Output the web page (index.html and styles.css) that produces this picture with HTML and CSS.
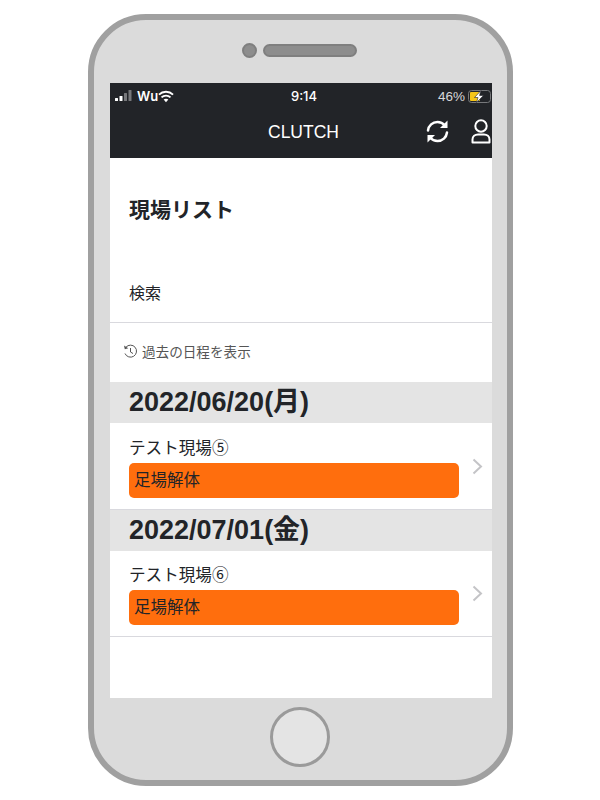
FILE: index.html
```html
<!DOCTYPE html>
<html lang="ja">
<head>
	<meta charset="UTF-8">
	<title>CLUTCH</title>
	<link rel="stylesheet" href="styles.css">
</head>
<body>
	<div class="phone">
		<div class="phone-top">
			<span class="camera"></span>
			<span class="speaker"></span>
		</div>
		<div class="screen">
			<div class="status">
				<div class="status-left">
					<svg class="signal" width="18" height="12" viewBox="0 0 18 12">
						<rect x="0" y="8" width="3" height="3" rx="0.5" fill="#fff"/>
						<rect x="4.500" y="6" width="3" height="5" rx="0.5" fill="#fff"/>
						<rect x="9" y="3" width="3" height="8" rx="0.5" fill="#77787b"/>
						<rect x="13.500" y="0" width="3" height="11" rx="0.5" fill="#77787b"/>
					</svg>
					<span class="carrier">Wu</span>
					<svg class="wifi" width="16" height="13" viewBox="0 0 17 13">
						<path d="M1 4.500C5.200 0.500 11.800 0.500 16 4.500" fill="none" stroke="#fff" stroke-width="2"/>
						<path d="M3.700 7.400C6.400 4.900 10.600 4.900 13.300 7.400" fill="none" stroke="#fff" stroke-width="2"/>
						<path d="M6 9.800C7.400 8.700 9.600 8.700 11 9.800L8.500 12.700Z" fill="#fff"/>
					</svg>
				</div>
				<div class="status-time">9:14</div>
				<div class="status-right">
					<span>46%</span>
					<svg class="battery" width="23" height="13" viewBox="0 0 23 13">
						<rect x="0.500" y="0.500" width="22" height="12" rx="3" fill="none" stroke="#77787b"/>
						<rect x="2" y="2" width="10" height="9" rx="1" fill="#f5c518"/>
						<path d="M13 0.500L6.500 7.500H10L8.500 12.500L15.500 5.500H11.500Z" fill="#fff" stroke="#22242a" stroke-width="0.600"/>
					</svg>
				</div>
			</div>
			<div class="nav">
				<div class="nav-title">CLUTCH</div>
				<svg class="icon-sync" width="25" height="25" viewBox="0 0 25 25">
					<path d="M3 11.500C3.600 6.500 7.500 3 12.500 3C15.500 3 18 4.300 20 6.500" fill="none" stroke="#fff" stroke-width="2.500" stroke-linecap="round"/>
					<path d="M22.500 1.500V9H15Z" fill="#fff"/>
					<path d="M22 13.500C21.400 18.500 17.500 22 12.500 22C9.500 22 7 20.700 5 18.500" fill="none" stroke="#fff" stroke-width="2.500" stroke-linecap="round"/>
					<path d="M2.500 23.500V16H10Z" fill="#fff"/>
				</svg>
				<svg class="icon-user" width="20" height="25" viewBox="0 0 20 25">
					<circle cx="10" cy="7" r="5.700" fill="none" stroke="#fff" stroke-width="2"/>
					<path d="M1.500 23.500V20.500C1.500 17.500 4 15.500 7 15.500H13C16 15.500 18.500 17.500 18.500 20.500V23.500Z" fill="none" stroke="#fff" stroke-width="2" stroke-linejoin="round"/>
				</svg>
			</div>
			<h1 class="page-title">現場リスト</h1>
			<div class="search">検索</div>
			<div class="history">
				<svg width="15" height="15" viewBox="0 0 15 15">
					<path d="M3 3.200A6 6 0 1 1 2 9.500" fill="none" stroke="#555" stroke-width="1"/>
					<path d="M1 1.500L1.800 5.200L5.300 4.300Z" fill="#555"/>
					<path d="M7.500 4V8L10 9.500" fill="none" stroke="#555" stroke-width="1"/>
				</svg>
				<span>過去の日程を表示</span>
			</div>
			<div class="date-head">2022/06/20(月)</div>
			<div class="site">
				<div class="site-body">
					<div class="site-name">テスト現場⑤</div>
					<div class="site-tag">足場解体</div>
				</div>
				<svg class="chevron" width="11" height="17" viewBox="0 0 11 17">
					<path d="M1.500 1.500L9 8.500L1.500 15.500" fill="none" stroke="#c4c4c7" stroke-width="2"/>
				</svg>
			</div>
			<div class="date-head">2022/07/01(金)</div>
			<div class="site">
				<div class="site-body">
					<div class="site-name">テスト現場⑥</div>
					<div class="site-tag">足場解体</div>
				</div>
				<svg class="chevron" width="11" height="17" viewBox="0 0 11 17">
					<path d="M1.500 1.500L9 8.500L1.500 15.500" fill="none" stroke="#c4c4c7" stroke-width="2"/>
				</svg>
			</div>
		</div>
		<div class="phone-bottom">
			<span class="home"></span>
		</div>
	</div>
</body>
</html>
```

FILE: styles.css
```css
*{padding: 0;margin: 0;}
*,*:after,*:before{box-sizing:border-box;}
html,body{height: 100%;width: 100%;background: #fff;}
body{
	padding: 14px 87px 14px 88px;
	font-family: "Liberation Sans", "Noto Sans CJK JP", sans-serif;
	color: #222428;
}
.phone{
	width: 425px;
	height: 772px;
	background: #dbdbdb;
	border: 6px solid #a0a0a0;
	border-radius: 58px;
	padding: 0 15px 0 16px;
	display: flex;
	flex-direction: column;
}
.phone-top{
	height: 63px;
	display: flex;
	align-items: flex-start;
	justify-content: center;
	gap: 6px;
	padding: 23px 3px 0 0;
}
.camera{
	width: 15px;
	height: 15px;
	border-radius: 50%;
	background: #8d8d8d;
	border: 2px solid #7f7f7f;
}
.speaker{
	width: 94px;
	height: 13px;
	margin-top: 1px;
	border-radius: 7px;
	background: #8d8d8d;
	border: 2px solid #7f7f7f;
}
.screen{
	width: 382px;
	height: 615px;
	background: #fff;
}
.status{
	height: 24px;
	background: #222428;
	color: #d8d8da;
	display: grid;
	grid-template-columns: 1fr auto 1fr;
	align-items: center;
	font-size: 13.500px;
	padding: 2px 1px 0 5px;
}
.status-left{display: flex;align-items: center;gap: 4px;}
.carrier{font-family: "Inter", sans-serif;font-size: 13px;font-weight: 600;color: #fff;margin-right: -4px;}
.status-time{font-family: "Inter", sans-serif;font-size: 13px;color: #fff;font-weight: 500;margin-left: 2px;}
.status-right{display: flex;align-items: center;justify-content: flex-end;gap: 3px;}
.nav{
	height: 51px;
	background: #222428;
	color: #fff;
	display: flex;
	align-items: center;
	justify-content: flex-end;
	padding: 0 1px 2px 0;
	position: relative;
	gap: 20px;
}
.nav-title{
	position: absolute;
	left: 158px;
	top: 13px;
	font-size: 17.500px;
	line-height: 24px;
}
.icon-sync{margin-right: 1px;}
.page-title{
	height: 103px;
	padding: 37px 0 0 19px;
	font-size: 21px;
	line-height: 30px;
	font-weight: bold;
}
.search{
	height: 62px;
	padding: 21px 0 0 19px;
	font-size: 16px;
	line-height: 24px;
	border-bottom: 1px solid #d9d9de;
}
.history{
	height: 59px;
	padding: 21px 0 0 13px;
	display: flex;
	align-items: flex-start;
	gap: 4px;
	font-size: 13.600px;
	line-height: 18px;
	color: #555;
}
.date-head{
	height: 41px;
	padding-left: 19px;
	background: #e4e4e4;
	font-size: 27px;
	line-height: 41px;
	font-weight: bold;
}
.site{
	height: 86.500px;
	padding: 13.750px 9px 0 19px;
	display: flex;
	align-items: flex-start;
	gap: 13px;
	border-bottom: 1px solid #d9d9de;
}
.site-body{width: 330px;}
.site-name{
	font-size: 16.600px;
	line-height: 24px;
}
.site-tag{
	height: 35px;
	margin-top: 2px;
	padding-left: 5px;
	background: #ff6e0d;
	border-radius: 5px;
	font-size: 16.500px;
	line-height: 35px;
}
.chevron{margin-top: 21px;}
.phone-bottom{
	flex: 1;
	display: flex;
	justify-content: center;
	padding: 9px 2px 0 0;
}
.home{
	width: 60px;
	height: 60px;
	border-radius: 50%;
	background: #e4e4e4;
	border: 3px solid #9a9a9a;
}
```
